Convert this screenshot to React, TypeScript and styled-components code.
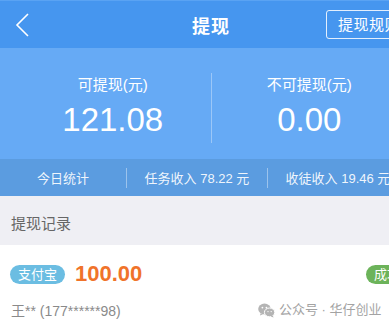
import React from 'react';
import styled, { createGlobalStyle } from 'styled-components';

const GlobalStyle = createGlobalStyle`
  html, body {
    margin: 0;
    padding: 0;
    background: #ffffff;
    overflow: hidden;
  }
  body {
    font-family: 'Liberation Sans', 'Noto Sans CJK SC', sans-serif;
  }
`;

const CJK = `'Liberation Sans', 'Noto Sans CJK SC', sans-serif`;

const Page = styled.div`
  width: 422px;
  min-height: 324px;
  background: #efeff4;
  position: relative;
`;

const Header = styled.header`
  height: 47px;
  border-top: 1px solid #5aa3f3;
  background: #4696ef;
  display: grid;
  grid-template-columns: 1fr auto 1fr;
  align-items: center;
`;

const BackButton = styled.div`
  display: flex;
  align-items: center;
  padding-left: 15px;
  height: 100%;
`;

const Title = styled.h1`
  margin: 0;
  color: #ffffff;
  font-family: ${CJK};
  font-size: 18px;
  font-weight: 700;
  letter-spacing: 1px;
`;

const RulesButton = styled.div`
  justify-self: end;
  margin-right: 10px;
  height: 27px;
  padding: 0 11px;
  border: 1px solid rgba(255, 255, 255, 0.85);
  border-radius: 3px;
  color: #ffffff;
  font-family: ${CJK};
  font-size: 15px;
  line-height: 27px;
  letter-spacing: 0.5px;
  white-space: nowrap;
`;

const Panel = styled.section`
  background: #66aaf5;
  padding: 25px 15px 16px;
  display: flex;
`;

const Column = styled.div<{ $divider?: boolean }>`
  flex: 1;
  height: 70px;
  display: flex;
  flex-direction: column;
  align-items: center;
  border-left: ${(p) => (p.$divider ? '1px solid rgba(255,255,255,0.35)' : 'none')};
`;

const Label = styled.div`
  margin-top: 1px;
  color: #ffffff;
  font-family: ${CJK};
  font-size: 15px;
  line-height: 22px;
`;

const Amount = styled.div`
  margin-top: 4px;
  color: #ffffff;
  font-family: 'Liberation Sans', sans-serif;
  font-size: 33px;
  line-height: 40px;
  font-weight: 400;
`;

const StatsBar = styled.div`
  height: 37px;
  background: #5b9ce0;
  display: flex;
  align-items: center;
`;

const StatCell = styled.div<{ $width: number }>`
  width: ${(p) => p.$width}px;
  text-align: center;
  color: rgba(255, 255, 255, 0.92);
  font-family: ${CJK};
  font-size: 13px;
  white-space: nowrap;
`;

const StatDivider = styled.div`
  width: 1px;
  height: 20px;
  background: rgba(255, 255, 255, 0.4);
`;

const SectionTitle = styled.div`
  height: 49px;
  padding-left: 11px;
  display: flex;
  align-items: center;
  padding-top: 4px;
  box-sizing: border-box;
  color: #666666;
  font-family: ${CJK};
  font-size: 15px;
`;

const Card = styled.div`
  background: #ffffff;
  padding: 16px 14px 10px 10px;
`;

const RecordTop = styled.div`
  display: flex;
  align-items: center;
  height: 26px;
`;

const Pill = styled.span<{ $color: string }>`
  display: inline-block;
  height: 19px;
  line-height: 19px;
  padding: 0 8px;
  border-radius: 10px;
  background: ${(p) => p.$color};
  color: #ffffff;
  font-family: ${CJK};
  font-size: 13px;
`;

const RecordAmount = styled.span`
  margin-left: 10px;
  color: #f0732a;
  font-family: 'Liberation Sans', sans-serif;
  font-size: 22px;
  font-weight: 700;
`;

const Spacer = styled.div`
  flex: 1;
`;

const RecordBottom = styled.div`
  margin-top: 14px;
  height: 20px;
  line-height: 20px;
  padding-left: 1px;
  color: #8a8a8a;
  font-family: ${CJK};
  font-size: 14px;
`;

const Watermark = styled.div`
  position: absolute;
  left: 258px;
  top: 301px;
  display: flex;
  align-items: center;
  gap: 4px;
  color: #a3a3a3;
  font-family: ${CJK};
  font-size: 13px;
  line-height: 18px;
`;

const ChevronLeft = () => (
  <svg width="14" height="24" viewBox="0 0 14 24" fill="none">
    <polyline points="13,1 2,12 13,23" stroke="#ffffff" strokeWidth="1.6" strokeLinejoin="miter" />
  </svg>
);

const WechatIcon = () => (
  <svg width="17" height="15" viewBox="0 0 17 15">
    <ellipse cx="6.5" cy="6" rx="6.3" ry="5.4" fill="#b4b4b4" />
    <path d="M2.6 10.2 L2 12.6 L5 11.2 Z" fill="#b4b4b4" />
    <ellipse cx="11.6" cy="9.4" rx="5.2" ry="4.4" fill="#b4b4b4" stroke="#ffffff" strokeWidth="1" />
    <path d="M14.6 12.6 L15.6 14.6 L12.6 13.4 Z" fill="#b4b4b4" />
    <circle cx="4.4" cy="4.6" r="0.9" fill="#ffffff" />
    <circle cx="8.4" cy="4.6" r="0.9" fill="#ffffff" />
    <circle cx="10" cy="8.6" r="0.7" fill="#ffffff" />
    <circle cx="13.2" cy="8.6" r="0.7" fill="#ffffff" />
  </svg>
);

const App: React.FC = () => {
  return (
    <Page>
      <GlobalStyle />
      <Header>
        <BackButton>
          <ChevronLeft />
        </BackButton>
        <Title>提现</Title>
        <RulesButton>提现规则</RulesButton>
      </Header>

      <Panel>
        <Column>
          <Label>可提现(元)</Label>
          <Amount>121.08</Amount>
        </Column>
        <Column $divider>
          <Label>不可提现(元)</Label>
          <Amount>0.00</Amount>
        </Column>
      </Panel>

      <StatsBar>
        <StatCell $width={126}>今日统计</StatCell>
        <StatDivider />
        <StatCell $width={140}>任务收入 78.22 元</StatCell>
        <StatDivider />
        <StatCell $width={140}>收徒收入 19.46 元</StatCell>
      </StatsBar>

      <SectionTitle>提现记录</SectionTitle>

      <Card>
        <RecordTop>
          <Pill $color="#6bbde2">支付宝</Pill>
          <RecordAmount>100.00</RecordAmount>
          <Spacer />
          <Pill $color="#6cb35a">成功</Pill>
        </RecordTop>
        <RecordBottom>王** (177******98)</RecordBottom>
      </Card>

      <Watermark>
        <WechatIcon />
        <span>公众号 · 华仔创业</span>
      </Watermark>
    </Page>
  );
};

export default App;
